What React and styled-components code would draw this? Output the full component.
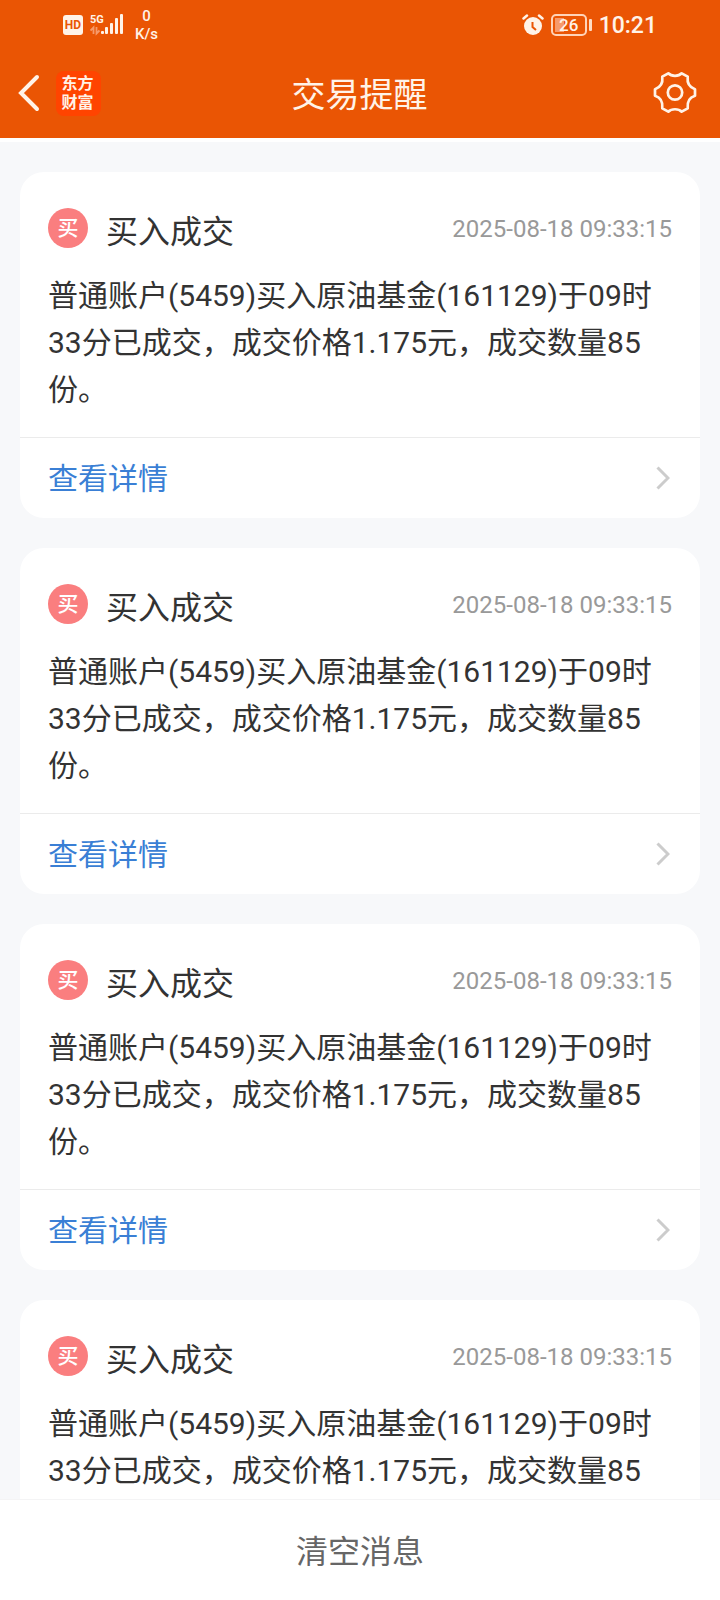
import React from "react";
import styled, { createGlobalStyle } from "styled-components";

const GlobalStyle = createGlobalStyle`
  * { box-sizing: border-box; }
  body {
    margin: 0;
    background: #f7f8fa;
    font-family: Roboto, "Noto Sans CJK SC", sans-serif;
    color: #333;
  }
  button { font-family: inherit; border: 0; padding: 0; background: none; cursor: pointer; }
`;

const Screen = styled.div`
  display: flex;
  flex-direction: column;
  height: 100vh;
`;

const Header = styled.header`
  flex: none;
  background: #ea5504;
  color: #fff3e8;
  border-bottom: 4px solid #fff;
`;

const StatusBar = styled.div`
  display: flex;
  align-items: center;
  justify-content: space-between;
  height: 48px;
  padding: 2px 63px 0 63px;
`;

const StatusGroup = styled.div`
  display: flex;
  align-items: center;
  gap: 7px;
`;

const HdBadge = styled.span`
  width: 20px;
  height: 20px;
  border-radius: 3px;
  background: #fff3e8;
  color: #ea5504;
  font-size: 12px;
  font-weight: 700;
  line-height: 20px;
  text-align: center;
`;

const Signal = styled.svg`
  display: block;
  width: 34px;
  height: 24px;
`;

const Speed = styled.span`
  margin-left: 4px;
  font-size: 15px;
  font-weight: 500;
  line-height: 18px;
  text-align: center;
`;

const SpeedLine = styled.span`
  display: block;
`;

const Battery = styled.span`
  display: flex;
  align-items: center;
  gap: 2px;

  &::after {
    content: "";
    width: 3px;
    height: 12px;
    border-radius: 1px;
    background: #ffdcc4;
  }
`;

const BatteryBody = styled.span`
  width: 36px;
  height: 22px;
  border: 2px solid #ffd3b8;
  border-radius: 5px;
  background: linear-gradient(90deg, #f69a6b 9px, transparent 9px) 2px 2px / 28px 14px no-repeat;
  font-size: 17px;
  font-weight: 500;
  line-height: 18px;
  text-align: center;
`;

const Clock = styled.span`
  padding-top: 1px;
  font-size: 23px;
  font-weight: 500;
  line-height: 28px;
`;

const NavBar = styled.div`
  display: grid;
  grid-template-columns: 1fr auto 1fr;
  align-items: center;
  height: 90px;
  padding: 0 23px 0 18px;
`;

const NavStart = styled.div`
  display: flex;
  align-items: center;
  gap: 16px;
`;

const IconButton = styled.button`
  display: block;
  color: #fff3e8;
  justify-self: end;

  svg { display: block; }
`;

const Logo = styled.span`
  width: 45px;
  height: 45px;
  padding: 2px 2px 0 0;
  border-radius: 8px;
  background: #ff4400;
  font-family: "Noto Sans CJK SC", sans-serif;
  font-size: 16px;
  font-weight: 700;
  line-height: 19px;
  text-align: center;
`;

const PageTitle = styled.h1`
  margin: 4px 0 0 4px;
  font-size: 34px;
  font-weight: 400;
  line-height: 48px;
`;

const List = styled.main`
  flex: 1;
  min-height: 0;
  overflow-y: auto;
  padding: 30px 20px;
  display: flex;
  flex-direction: column;
  gap: 30px;
  scrollbar-width: none;
`;

const Card = styled.article`
  flex: none;
  border-radius: 24px;
  background: #fff;
`;

const CardBody = styled.div`
  padding: 32px 28px 24px;
`;

const CardHead = styled.div`
  display: flex;
  align-items: center;
  height: 48px;
`;

const Badge = styled.span`
  width: 40px;
  height: 40px;
  margin-right: 18px;
  border-radius: 50%;
  background: #fa7e7f;
  color: #fff;
  font-size: 21px;
  font-weight: 500;
  line-height: 40px;
  text-align: center;
`;

const CardTitle = styled.h2`
  flex: 1;
  margin: 8px 0 0;
  font-size: 32px;
  font-weight: 400;
  line-height: 48px;
`;

const Time = styled.time`
  margin-top: 2px;
  color: #999;
  font-size: 24px;
  line-height: 32px;
`;

const Message = styled.p`
  margin: 20px 0 0;
  font-size: 30px;
  line-height: 47px;
`;

const DetailLink = styled.a`
  display: flex;
  align-items: center;
  justify-content: space-between;
  height: 81px;
  padding: 0 30px 0 28px;
  border-top: 1px solid #ebebeb;
  color: #3a7fd5;
  font-size: 30px;
  line-height: 48px;
  text-decoration: none;
`;

const LinkLabel = styled.span`
  padding-top: 2px;
`;

const ClearButton = styled.button`
  flex: none;
  height: 101px;
  && {
    padding-top: 3px;
    background: #fff;
    border-top: 1px solid #f4f4f5;
  }
  color: #666;
  font-size: 32px;
  line-height: 48px;
`;

function SignalIcon() {
  return (
    <Signal viewBox="0 0 34 24" aria-label="5G">
      <text x="0" y="10" fontSize="11" fontWeight="700" fill="#fff3e8">5G</text>
      <path d="M3.500 21v-6.500l-3 3M6.500 14v6.500l3-3" stroke="#f69a6b" strokeWidth="1.800" fill="none" />
      <g fill="#fff3e8">
        <rect x="11" y="18" width="3" height="3" rx="1" />
        <rect x="15" y="14" width="3" height="7" rx="1" />
        <rect x="20" y="10" width="3" height="11" rx="1" />
        <rect x="25" y="5" width="3" height="16" rx="1" />
        <rect x="30" y="1" width="3" height="20" rx="1" />
      </g>
    </Signal>
  );
}

function AlarmIcon() {
  return (
    <svg width="22" height="22" viewBox="0 0 22 22" fill="none" aria-hidden="true">
      <circle cx="11" cy="12" r="9" fill="#fff3e8" />
      <path d="M1.500 4.500 5 1.500M20.500 4.500 17 1.500" stroke="#fff3e8" strokeWidth="2.500" strokeLinecap="round" />
      <path d="M10.500 8v5l3.500 3" stroke="#ea5504" strokeWidth="2" />
    </svg>
  );
}

function GearIcon() {
  return (
    <svg width="44" height="44" viewBox="0 0 44 44" fill="none" stroke="currentColor" strokeWidth="2.700" strokeLinejoin="round" aria-hidden="true">
      <path d="M15.300 2.300C18.500 5.600 25.500 5.600 28.700 2.300L34.700 5.700C34 12 36.500 16.500 42 18.200V24.800C36.500 26.500 34 31 34.700 37.300L28.700 40.700C25.500 37.400 18.500 37.400 15.300 40.700L9.300 37.300C10 31 7.500 26.500 2 24.800V18.200C7.500 16.500 10 12 9.300 5.700Z" />
      <circle cx="22" cy="21.500" r="7.200" />
    </svg>
  );
}

function BuyCard({ title, time, message }) {
  return (
    <Card>
      <CardBody>
        <CardHead>
          <Badge>买</Badge>
          <CardTitle>{title}</CardTitle>
          <Time>{time}</Time>
        </CardHead>
        <Message>{message}</Message>
      </CardBody>
      <DetailLink href="#detail">
        <LinkLabel>查看详情</LinkLabel>
        <svg width="14" height="24" viewBox="0 0 14 24" fill="none" stroke="#ccc" strokeWidth="3" aria-hidden="true">
          <path d="M1.500 1.500 12 12 1.500 22.500" />
        </svg>
      </DetailLink>
    </Card>
  );
}

const notices = [1, 2, 3, 4].map((id) => ({
  id,
  title: "买入成交",
  time: "2025-08-18 09:33:15",
  message: "普通账户(5459)买入原油基金(161129)于09时33分已成交，成交价格1.175元，成交数量85份。",
}));

export default function App() {
  return (
    <Screen>
      <GlobalStyle />
      <Header>
        <StatusBar>
          <StatusGroup>
            <HdBadge>HD</HdBadge>
            <SignalIcon />
            <Speed>
              <SpeedLine>0</SpeedLine>
              <SpeedLine>K/s</SpeedLine>
            </Speed>
          </StatusGroup>
          <StatusGroup>
            <AlarmIcon />
            <Battery>
              <BatteryBody>26</BatteryBody>
            </Battery>
            <Clock>10:21</Clock>
          </StatusGroup>
        </StatusBar>
        <NavBar>
          <NavStart>
            <IconButton aria-label="返回">
              <svg width="22" height="38" viewBox="0 0 22 38" fill="none" stroke="currentColor" strokeWidth="4" strokeLinecap="round">
                <path d="M19 3 3 19l16 16" />
              </svg>
            </IconButton>
            <Logo>东方<br />财富</Logo>
          </NavStart>
          <PageTitle>交易提醒</PageTitle>
          <IconButton aria-label="设置">
            <GearIcon />
          </IconButton>
        </NavBar>
      </Header>
      <List>
        {notices.map((n) => (
          <BuyCard key={n.id} title={n.title} time={n.time} message={n.message} />
        ))}
      </List>
      <ClearButton>清空消息</ClearButton>
    </Screen>
  );
}
